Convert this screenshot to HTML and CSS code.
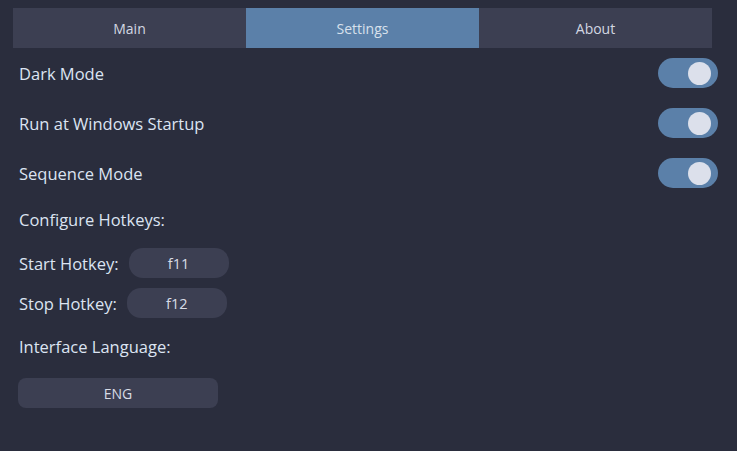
FILE: index.html
```html
<!DOCTYPE html>
<html>
<head>
<meta charset="utf-8">
<link rel="stylesheet" href="styles.css">
</head>
<body>
<div class="app">
  <nav class="tabs">
    <div class="tab">Main</div>
    <div class="tab active">Settings</div>
    <div class="tab">About</div>
  </nav>
  <main class="content">
    <div class="toggle-row"><span>Dark Mode</span><span class="switch"><span class="knob"></span></span></div>
    <div class="toggle-row"><span>Run at Windows Startup</span><span class="switch"><span class="knob"></span></span></div>
    <div class="toggle-row"><span>Sequence Mode</span><span class="switch"><span class="knob"></span></span></div>
    <div class="heading">Configure Hotkeys:</div>
    <div class="hotkey-row"><span>Start Hotkey:</span><button class="hotkey">f11</button></div>
    <div class="hotkey-row last"><span>Stop Hotkey:</span><button class="hotkey">f12</button></div>
    <div class="heading lang">Interface Language:</div>
    <button class="lang-btn">ENG</button>
  </main>
</div>
</body>
</html>
```

FILE: styles.css
```css
html, body {
  margin: 0;
  padding: 0;
  background: #2a2d3d;
  width: 737px;
  height: 451px;
  overflow: hidden;
}
.app {
  font-family: "Open Sans", "Noto Sans", sans-serif;
  color: #dce4f2;
  font-size: 16.5px;
}
.tabs {
  display: flex;
  margin: 8px 25px 0 13px;
  height: 40px;
}
.tab {
  flex: 1;
  display: flex;
  align-items: center;
  justify-content: center;
  background: #3c3f52;
  color: #d3d7e2;
  font-size: 14px;
}
.tab.active {
  background: #5b80a9;
  color: #d8e0ec;
}
.content {
  padding: 10px 19px 0 19px;
  display: flex;
  flex-direction: column;
}
.toggle-row {
  height: 30px;
  display: flex;
  align-items: center;
  justify-content: space-between;
  margin-bottom: 20px;
}
.switch {
  width: 60px;
  height: 30px;
  border-radius: 15px;
  background: #5b80a9;
  display: flex;
  align-items: center;
  justify-content: flex-end;
  padding-right: 7px;
  box-sizing: border-box;
}
.knob {
  width: 23px;
  height: 23px;
  border-radius: 50%;
  background: #dce0eb;
}
.heading {
  height: 24px;
  line-height: 24px;
  margin-bottom: 16px;
}
.heading.lang {
  margin-top: 17px;
  margin-bottom: 19px;
}
.hotkey-row {
  height: 30px;
  display: flex;
  align-items: center;
  gap: 10px;
  margin-bottom: 10px;
}
.hotkey-row.last { margin-bottom: 0; }
button {
  font-family: inherit;
  border: none;
  background: #3c3f52;
  color: #d8dce6;
  padding: 0;
}
.hotkey {
  width: 100px;
  height: 30px;
  border-radius: 14px;
  font-size: 14.5px;
}
.lang-btn {
  width: 200px;
  height: 30px;
  border-radius: 8px;
  margin-left: -1px;
  font-size: 14px;
}
```
